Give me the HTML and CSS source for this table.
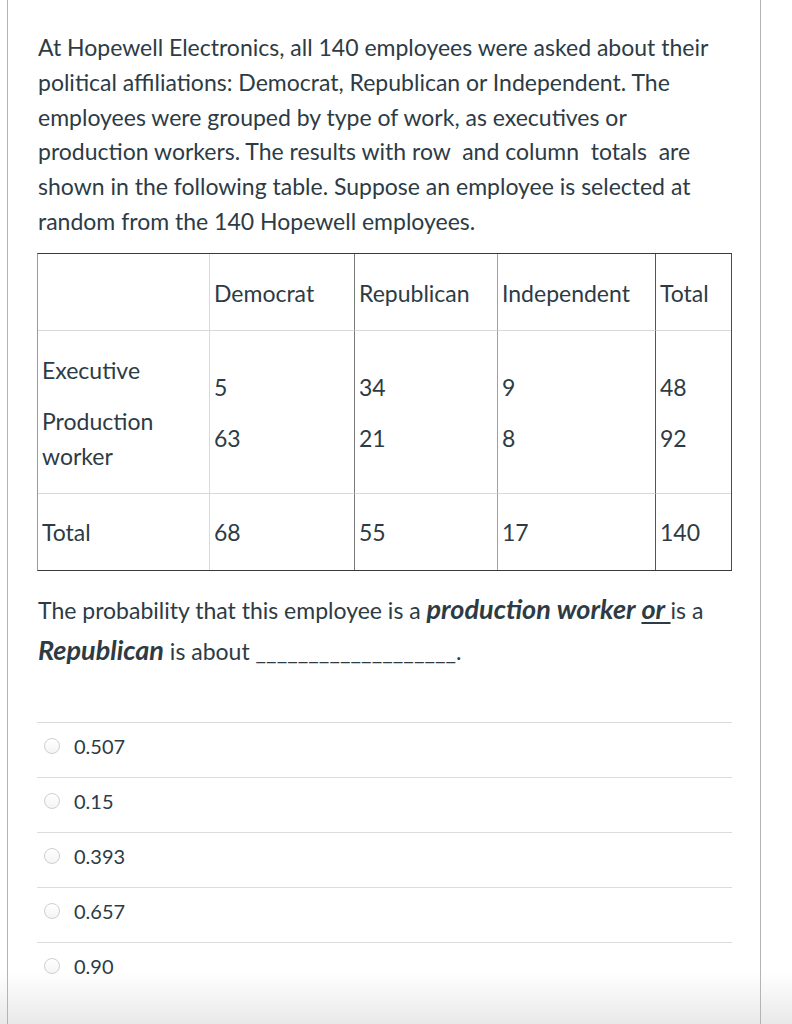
FILE: index.html
```html
<!DOCTYPE html>
<html lang="en">
<head>
<meta charset="utf-8">
<title>Question</title>
<link rel="stylesheet" href="styles.css">
</head>
<body>
<div class="question">
  <p class="intro">At Hopewell Electronics, all 140 employees were asked about their political affiliations: Democrat, Republican or Independent. The employees were grouped by type of work, as executives or production workers. The results with row&nbsp; and column&nbsp; totals&nbsp; are shown in the following table. Suppose an employee is selected at random from the 140 Hopewell employees.</p>

  <table class="data">
    <colgroup>
      <col class="c1"><col class="c2"><col class="c3"><col class="c4"><col class="c5">
    </colgroup>
    <tr class="head">
      <td class="b1"></td>
      <td class="b2">Democrat</td>
      <td class="b3">Republican</td>
      <td class="b4">Independent</td>
      <td>Total</td>
    </tr>
    <tr class="body">
      <td class="b1"><div class="stack labels"><div>Executive</div><div>Production<br>worker</div></div></td>
      <td class="b2"><div class="stack"><div>5</div><div>63</div></div></td>
      <td class="b3"><div class="stack"><div>34</div><div>21</div></div></td>
      <td class="b4"><div class="stack"><div>9</div><div>8</div></div></td>
      <td><div class="stack"><div>48</div><div>92</div></div></td>
    </tr>
    <tr class="total">
      <td class="b1">Total</td>
      <td class="b2">68</td>
      <td class="b3">55</td>
      <td class="b4">17</td>
      <td>140</td>
    </tr>
  </table>

  <p class="prompt">The probability that this employee is a <strong class="em">production worker</strong> <u class="em">or </u>is a <strong class="em">Republican</strong> is about ___________________.</p>

  <ul class="answers">
    <li class="answer"><span class="radio"></span><span class="label">0.507</span></li>
    <li class="answer"><span class="radio"></span><span class="label">0.15</span></li>
    <li class="answer"><span class="radio"></span><span class="label">0.393</span></li>
    <li class="answer"><span class="radio"></span><span class="label">0.657</span></li>
    <li class="answer"><span class="radio"></span><span class="label">0.90</span></li>
  </ul>
</div>
</body>
</html>
```

FILE: styles.css
```css
html, body {
  margin: 0;
  padding: 0;
}
body {
  height: 1024px;
  overflow: hidden;
  background: linear-gradient(to bottom, #ffffff 0, #ffffff 972px, #e9e9e9 1024px);
  font-family: Lato, "Open Sans", sans-serif;
  color: #2d3b45;
  font-size: 20px;
}
.question {
  box-sizing: border-box;
  margin-left: 7px;
  width: 754px;
  height: 1024px;
  border-left: 1px solid #b4b4b4;
  border-right: 1px solid #b4b4b4;
  padding: 30px 29px 0 30px;
}
.intro {
  margin: 0;
  font-size: 23px;
  line-height: 34.8px;
}
.data {
  margin: 14px 0 0 -1px;
  width: 695px;
  table-layout: fixed;
  border-collapse: separate;
  border-spacing: 0;
  border-top: 1px solid #3a3a3a;
  border-left: 1px solid #9a9a9a;
  border-right: 1px solid #4a4a4a;
  border-bottom: 1px solid #3a3a3a;
  font-size: 23px;
  line-height: 35px;
}
.c1 { width: 172px; }
.c2 { width: 145px; }
.c3 { width: 143px; }
.c4 { width: 158px; }
.c5 { width: 75px; }
.data td {
  box-sizing: border-box;
  padding: 0 4px;
  vertical-align: middle;
}
.b1 { border-right: 1px solid #d9d9d9; }
.b2 { border-right: 1px solid #7a7a7a; }
.b3 { border-right: 1px solid #a0a0a0; }
.b4 { border-right: 1px solid #555555; }
.head td, .body td { border-bottom: 1px solid #d9d9d9; }
.head td { height: 77px; padding-top: 3px; }
.body td { height: 163px; }
.total td { height: 76px; padding-top: 1px; }
.stack {
  display: flex;
  flex-direction: column;
  gap: 16px;
  padding-top: 2px;
}
.stack.labels {
  padding-top: 4px;
}
.prompt {
  margin: 18px 0 0;
  font-size: 23px;
  line-height: 40px;
}
.em {
  font-weight: 700;
  font-style: italic;
  font-size: 27px;
}
u.em {
  text-decoration-thickness: 2px;
  text-underline-offset: 3px;
}
.answers {
  list-style: none;
  margin: 51px 0 0 -1px;
  padding: 0;
  width: 695px;
}
.answer {
  display: flex;
  align-items: center;
  border-top: 1px solid #dcdcdc;
  padding: 6px 0 13px 7px;
  line-height: 35px;
  height: 35px;
}
.radio {
  box-sizing: border-box;
  width: 16px;
  height: 16px;
  border-radius: 50%;
  border: 1px solid #cfcfcf;
  background: linear-gradient(to bottom, #ffffff, #f4f4f4);
  margin-right: 14px;
  flex: none;
}
.label {
  font-size: 20px;
}
```
